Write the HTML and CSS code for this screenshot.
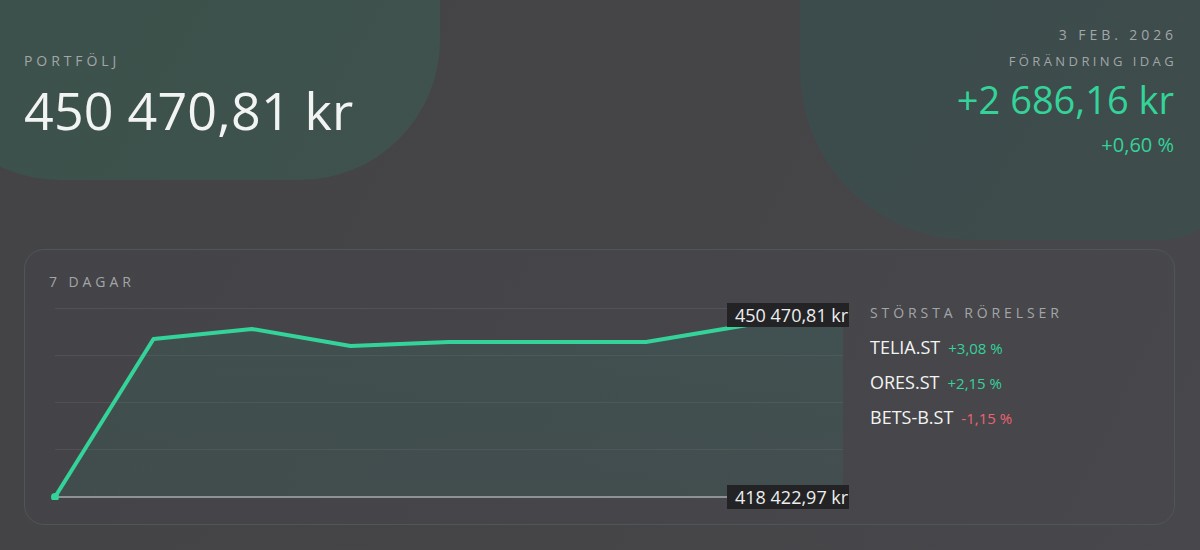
FILE: index.html
```html
<!DOCTYPE html>
<html lang="sv">
<head>
  <meta charset="UTF-8">
  <title>Portfölj</title>
  <link rel="stylesheet" href="styles.css">
</head>
<body>
  <div class="blob blob-left"></div>
  <div class="blob blob-right"></div>

  <div class="page">
    <header class="top">
      <div class="total">
        <div class="label">Portfölj</div>
        <div class="total-value">450 470,81 kr</div>
      </div>
      <div class="today">
        <div class="label">3 feb. 2026</div>
        <div class="label label-sm">Förändring idag</div>
        <div class="today-value">+2 686,16 kr</div>
        <div class="today-pct">+0,60 %</div>
      </div>
    </header>

    <section class="card">
      <div class="label">7 dagar</div>
      <div class="card-body">
        <div class="chart">
          <svg viewBox="0 0 800 200" width="800" height="200">
            <defs>
              <linearGradient id="area" x1="0" y1="0" x2="0" y2="1">
                <stop offset="0" stop-color="#2f7a66" stop-opacity="0.22"/>
                <stop offset="1" stop-color="#2f7a66" stop-opacity="0.16"/>
              </linearGradient>
            </defs>
            <g class="grid">
              <line x1="6" y1="8.5" x2="794" y2="8.5"/>
              <line x1="6" y1="55.5" x2="794" y2="55.5"/>
              <line x1="6" y1="102.5" x2="794" y2="102.5"/>
              <line x1="6" y1="149.5" x2="794" y2="149.5"/>
            </g>
            <polygon fill="url(#area)" points="6,197 104.5,39 203,29 301.5,46 400,42 498.5,42 597,42 695.5,25.5 794,9 794,197"/>
            <line class="baseline" x1="6" y1="197" x2="794" y2="197"/>
            <polyline class="line" points="6,197 104.5,39 203,29 301.5,46 400,42 498.5,42 597,42 695.5,25.5 794,9"/>
            <circle cx="6" cy="197" r="4" fill="#34d399"/>
          </svg>
          <span class="tag tag-max">450 470,81 kr</span>
          <span class="tag tag-min">418 422,97 kr</span>
        </div>

        <div class="movers">
          <div class="label">Största rörelser</div>
          <div class="mover"><span class="ticker">TELIA.ST</span><span class="up">+3,08 %</span></div>
          <div class="mover"><span class="ticker">ORES.ST</span><span class="up">+2,15 %</span></div>
          <div class="mover"><span class="ticker">BETS-B.ST</span><span class="down">-1,15 %</span></div>
        </div>
      </div>
    </section>
  </div>
</body>
</html>
```

FILE: styles.css
```css
body { margin: 0; height: 550px; overflow: hidden; position: relative; font-family: "Open Sans", "Noto Sans", sans-serif; color: #f2f4f3; background: linear-gradient(115deg, #444346 0%, #454447 55%, #48474b 100%); }

.blob { position: absolute; z-index: 0; }
.blob-left { left: -80px; top: -140px; width: 520px; height: 320px; border-radius: 0 0 140px 140px; background: linear-gradient(120deg, #3c514b, #3f524d); }
.blob-right { left: 800px; top: -100px; width: 440px; height: 340px; border-radius: 0 0 80px 170px; background: linear-gradient(120deg, #3c4b4b, #3e4c4c); }

.page { position: relative; z-index: 1; padding: 0 26px 0 24px; }

.label { font-size: 14px; line-height: 16px; letter-spacing: 0.28em; text-transform: uppercase; color: #a2a6a8; }
.label-sm { font-size: 13px; letter-spacing: 3.4px; }

.top { display: flex; justify-content: space-between; align-items: flex-start; height: 249px; }
.total { padding-top: 53px; }
.total-value { font-size: 52px; line-height: 64px; margin-top: 9px; letter-spacing: 0.2px; }
.today { padding-top: 27px; text-align: right; }
.today .label { margin-right: -3px; margin-bottom: 10px; }
.today-value { font-size: 38px; line-height: 44px; color: #34d399; margin-top: -2px; }
.today-pct { font-size: 20px; line-height: 28px; color: #34d399; margin-top: 10px; }

.card { margin-right: -1px; border: 1px solid #4a5957; border-radius: 20px; padding: 24px; background: linear-gradient(115deg, #444347 0%, #46454a 60%, #48474c 100%); }
.card-body { display: flex; gap: 21px; margin-top: 10px; }

.chart { position: relative; width: 800px; height: 200px; }
.chart svg { display: block; }
.grid line { stroke: #ffffff; stroke-opacity: 0.07; stroke-width: 1; }
.baseline { stroke: #8d9297; stroke-width: 2; }
.line { fill: none; stroke: #34d399; stroke-width: 4; stroke-linejoin: round; }

.tag { position: absolute; right: 0; padding: 0 0 0 8px; width: 114px; height: 24px; line-height: 24px; font-size: 18px; white-space: nowrap; color: #eceeed; background: #232326; }
.tag-max { top: 3px; }
.tag-min { top: 185px; }

.movers { padding-top: 5px; }
.movers .label { margin-bottom: 14px; }
.mover { display: flex; align-items: baseline; gap: 8px; height: 35px; }
.ticker { font-size: 18px; color: #f2f4f3; }
.up { font-size: 15px; color: #34d399; }
.down { font-size: 15px; color: #ec6470; }
```
